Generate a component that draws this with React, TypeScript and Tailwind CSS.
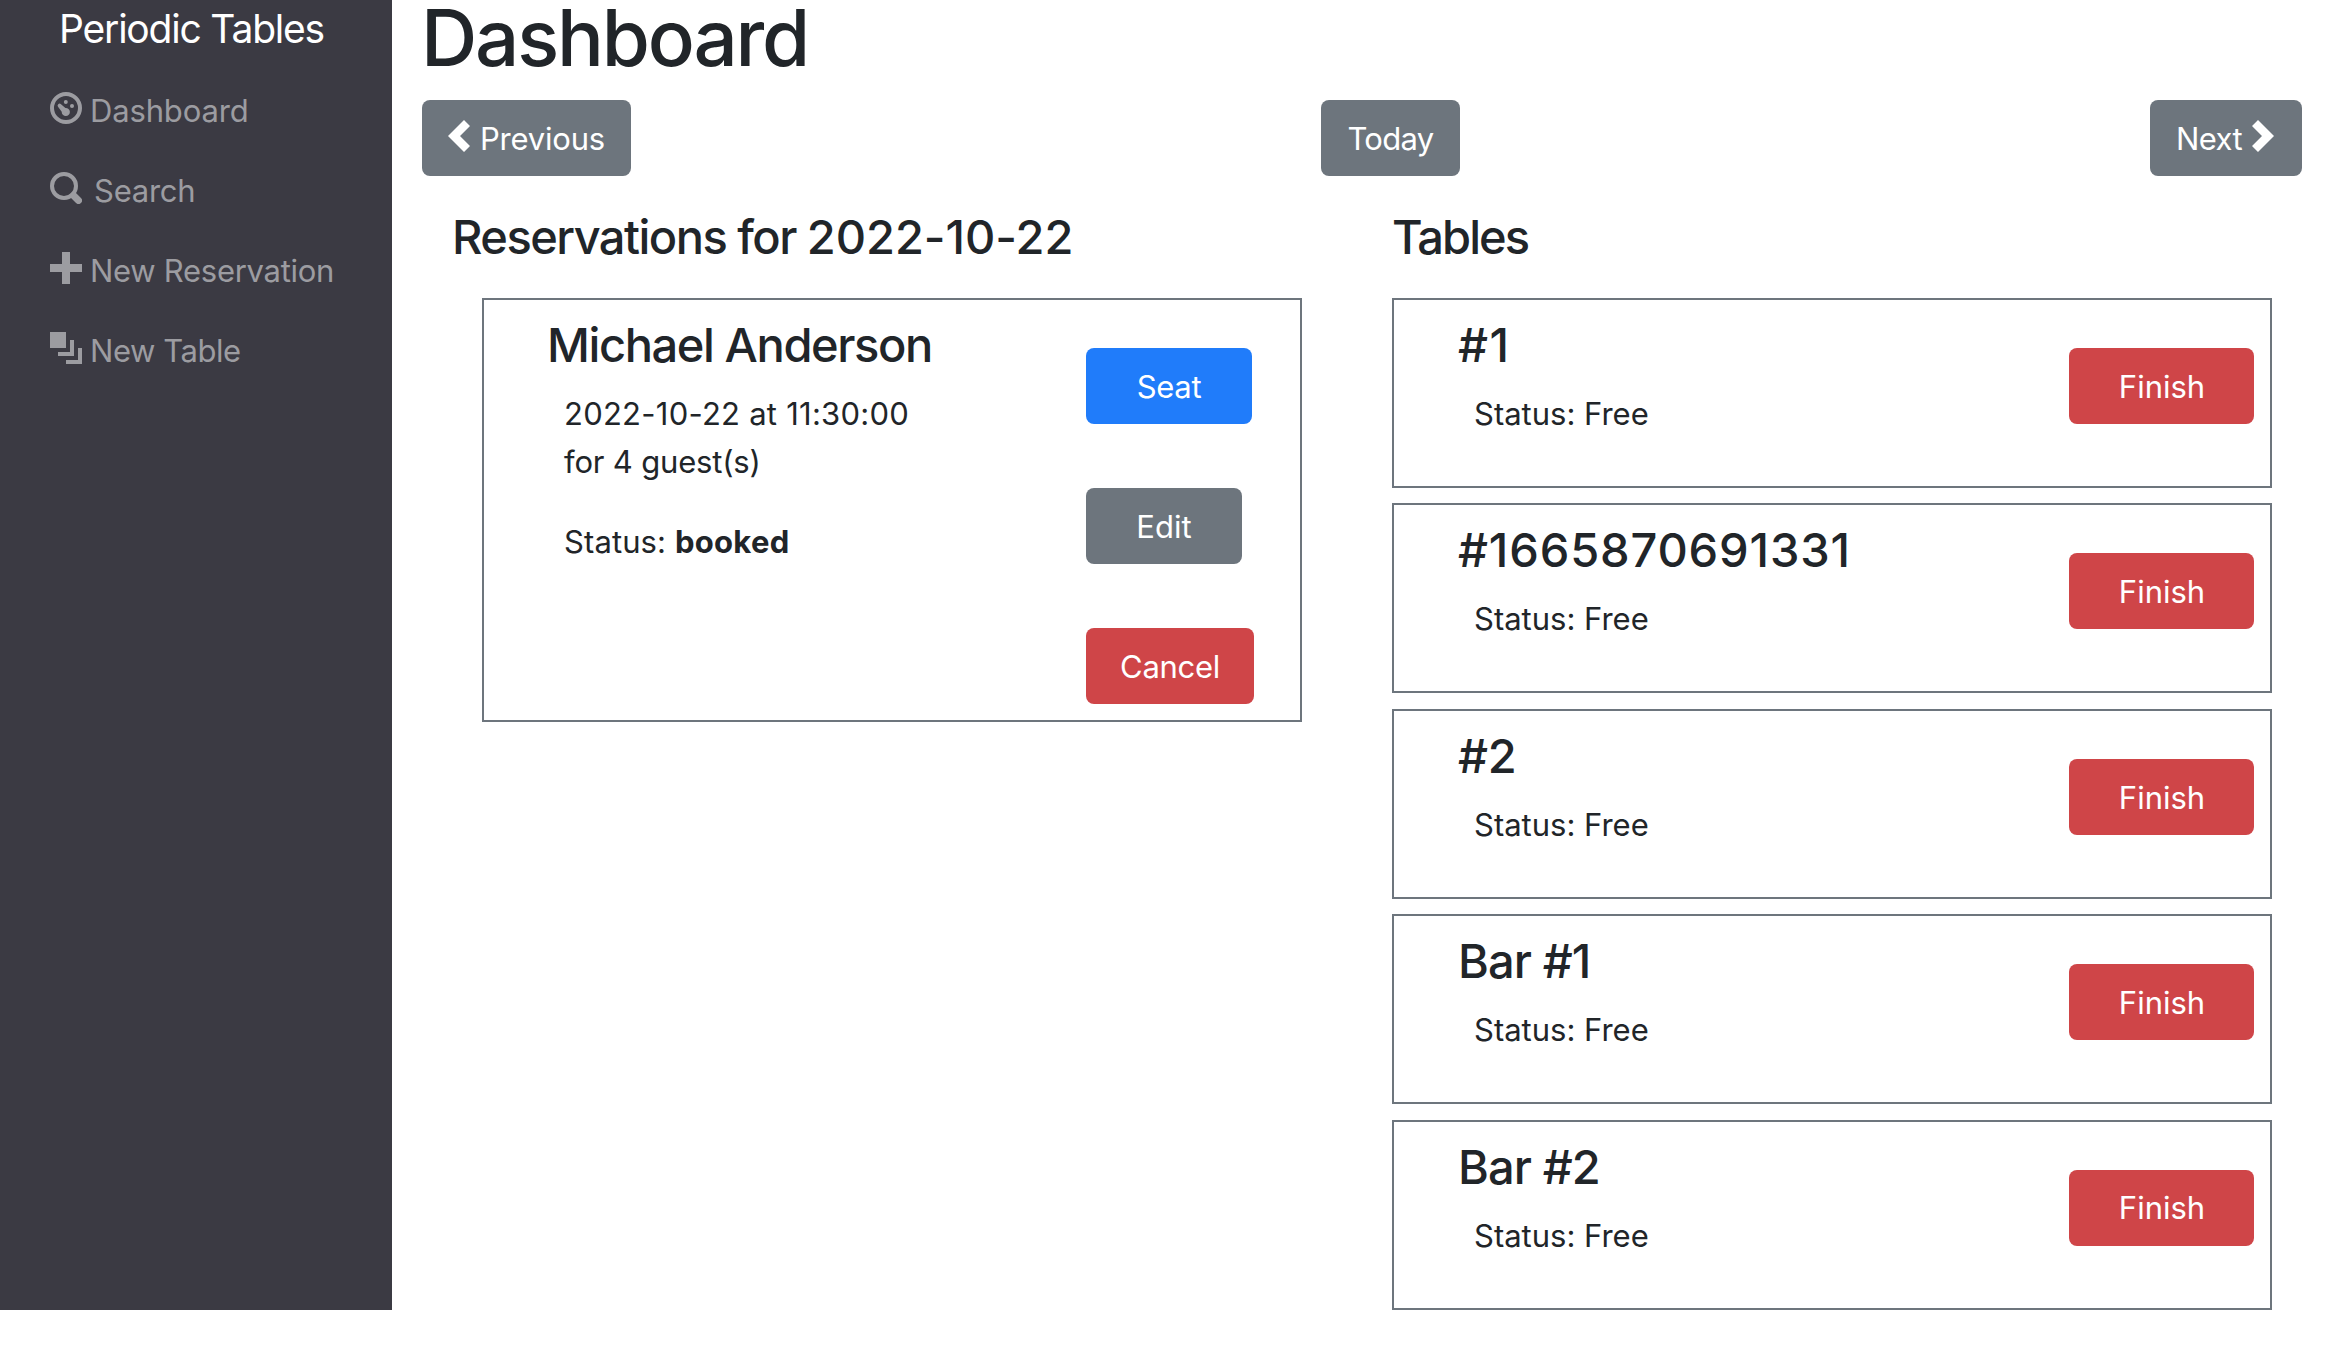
import type { ReactNode } from "react";

function NavItem({ icon, children, gap = "gap-2" }: { icon: ReactNode; children: ReactNode; gap?: string }) {
  return (
    <a className={`flex h-20 items-center pl-[50px] text-[31px] text-[#9c9ca1] ${gap}`}>
      <svg className="size-8 shrink-0" viewBox="0 0 32 32" fill="currentColor">
        {icon}
      </svg>
      <span className="pt-[7px]">{children}</span>
    </a>
  );
}

const dashboardIcon = (
  <>
    <circle cx="16" cy="16" r="14" fill="none" stroke="currentColor" strokeWidth="4" />
    <circle cx="15.8" cy="10" r="2" />
    <circle cx="22" cy="14" r="2" />
    <path d="M8.2 12.2a2 2 0 0 1 2.8 0l4.4 3.7a4.1 4.1 0 1 1-3.7 3.9l-3.5-4.8a2 2 0 0 1 0-2.8z" />
  </>
);

const searchIcon = (
  <>
    <circle cx="14" cy="14" r="12" fill="none" stroke="currentColor" strokeWidth="4" />
    <path d="M23.5 23.5l5 5" fill="none" stroke="currentColor" strokeWidth="7" strokeLinecap="round" />
  </>
);

const plusIcon = <path d="M12 0h8v12h12v8H20v12h-8V20H0v-8h12z" />;

const layersIcon = <path d="M0 0h16v16H0zM20 8h4v16H8v-4h12zM28 16h4v16H16v-4h12z" />;

const buttonBase = "flex h-[76px] shrink-0 items-center justify-center rounded-lg text-[31px] text-white";

function Heading({ children, className }: { children: ReactNode; className: string }) {
  return <h4 className={`h-[58px] text-[47px] leading-[58px] font-medium ${className}`}>{children}</h4>;
}

const tables = [
  { name: "#1", spacing: "tracking-[1.5px]" },
  { name: "#1665870691331", spacing: "tracking-[0.85px]" },
  { name: "#2", spacing: "tracking-[-0.3px]" },
  { name: "Bar #1", spacing: "tracking-[-0.9px]" },
  { name: "Bar #2", spacing: "tracking-[-0.9px]" },
];

function TableCard({ name, spacing }: { name: string; spacing: string }) {
  return (
    <div className="flex h-[190px] justify-between border-2 border-[#6d757d] pr-4 pl-16">
      <div className="pt-4">
        <Heading className={spacing}>{name}</Heading>
        <p className="mt-4 ml-4 text-[31px] leading-[48.5px]">Status: Free</p>
      </div>
      <button className={`${buttonBase} mt-12 w-[185px] bg-[#cf4548]`}>
        <span className="pt-0.5 pl-px">Finish</span>
      </button>
    </div>
  );
}

export default function App() {
  return (
    <div className="flex h-[1356px] items-start bg-white font-['Inter',sans-serif] whitespace-nowrap text-[#212529]">
      <nav className="h-[1310px] w-[392px] shrink-0 bg-[#3b3a43]">
        <div className="h-[58px] pl-[59px] text-[39px] leading-[58px] tracking-[-1.2px] text-white">Periodic Tables</div>
        <div className="mt-2.5">
          <NavItem icon={dashboardIcon}>
            <span className="tracking-[-0.15px]">Dashboard</span>
          </NavItem>
          <NavItem icon={searchIcon} gap="gap-3">
            <span className="tracking-[-0.25px]">Search</span>
          </NavItem>
          <NavItem icon={plusIcon}>
            <span className="tracking-[-0.28px]">New Reservation</span>
          </NavItem>
          <NavItem icon={layersIcon}>
            <span className="tracking-[-0.45px]">New Table</span>
          </NavItem>
        </div>
      </nav>

      <main className="w-[1910px] pl-[30px]">
        <h1 className="-ml-px h-[75px] text-[78px] leading-[75px] font-medium tracking-[-2.2px]">Dashboard</h1>

        <div className="mt-[25px] flex justify-between">
          <button className={`${buttonBase} w-[209px] gap-2.5 bg-[#6d757d] tracking-[-0.2px]`}>
            <svg className="-mt-1 h-8 w-[22px]" viewBox="0 0 22 32" fill="currentColor">
              <path d="M0 16L16 0l6 6-10 10 10 10-6 6z" />
            </svg>
            <span className="pt-0.5">Previous</span>
          </button>
          <button className={`${buttonBase} w-[139px] bg-[#6d757d] tracking-[-0.7px]`}>
            <span className="pt-0.5">Today</span>
          </button>
          <button className={`${buttonBase} w-[152px] gap-2.5 bg-[#6d757d] pr-0.5 tracking-[-0.59px]`}>
            <span className="pt-0.5">Next</span>
            <svg className="-mt-1 h-8 w-[22px]" viewBox="0 0 22 32" fill="currentColor">
              <path d="M22 16L6 0 0 6l10 10L0 26l6 6z" />
            </svg>
          </button>
        </div>

        <div className="mt-8 flex justify-between px-[30px]">
          <section className="w-[850px]">
            <Heading className="tracking-[-1.52px]">
              Reservations for <span className="tracking-[-0.05px]">2022-10-22</span>
            </Heading>
            <div className="mt-8 ml-[30px] flex h-[424px] border-2 border-[#6d757d] pl-[63px]">
              <div className="w-[539px] pt-4">
                <Heading className="tracking-[-1.4px]">Michael Anderson</Heading>
                <div className="mt-4 ml-[17px] text-[31px] leading-12">
                  <p className="tracking-[0.25px]">2022-10-22 at 11:30:00</p>
                  <p className="tracking-[-0.18px]">for 4 guest(s)</p>
                  <p className="mt-8">
                    <span className="tracking-[0.1px]">Status: </span>
                    <b className="font-bold tracking-[0.3px]">booked</b>
                  </p>
                </div>
              </div>
              <div className="flex flex-col items-start gap-16 pt-12">
                <button className={`${buttonBase} w-[166px] bg-[#207cfa] tracking-[-0.3px]`}>
                  <span className="pt-0.5">Seat</span>
                </button>
                <button className={`${buttonBase} w-[156px] bg-[#6d757d]`}>
                  <span className="pt-0.5">Edit</span>
                </button>
                <button className={`${buttonBase} w-[168px] bg-[#cf4548] tracking-[-0.3px]`}>
                  <span className="pt-0.5">Cancel</span>
                </button>
              </div>
            </div>
          </section>

          <section className="w-[880px]">
            <Heading className="tracking-[-1.95px]">Tables</Heading>
            <div className="mt-8 flex flex-col gap-[15.4px]">
              {tables.map((table) => (
                <TableCard key={table.name} name={table.name} spacing={table.spacing} />
              ))}
            </div>
          </section>
        </div>
      </main>
    </div>
  );
}
